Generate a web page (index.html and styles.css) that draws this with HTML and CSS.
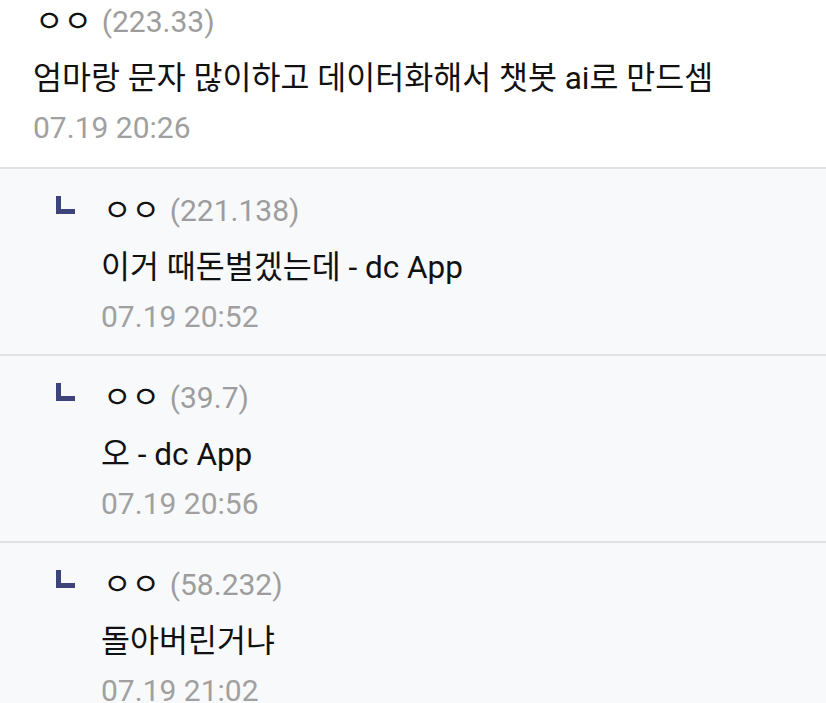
FILE: index.html
```html
<!DOCTYPE html>
<html lang="ko">

<head>
    <meta charset="UTF-8">
    <meta name="viewport" content="width=device-width, initial-scale=1.0">
    <title>댓글</title>
    <link rel="stylesheet" href="styles.css">
</head>

<body>
    <ul class="comments">
        <li class="comment first">
            <div class="writer">ㅇㅇ <span class="ip">(223.33)</span></div>
            <p class="text">엄마랑 문자 많이하고 데이터화해서 챗봇 ai로 만드셈</p>
            <div class="date">07.19 20:26</div>
        </li>
        <li class="comment reply">
            <span class="mark"></span>
            <div class="writer">ㅇㅇ <span class="ip">(221.138)</span></div>
            <p class="text">이거 때돈벌겠는데 - dc App</p>
            <div class="date">07.19 20:52</div>
        </li>
        <li class="comment reply">
            <span class="mark"></span>
            <div class="writer">ㅇㅇ <span class="ip">(39.7)</span></div>
            <p class="text">오 - dc App</p>
            <div class="date">07.19 20:56</div>
        </li>
        <li class="comment reply">
            <span class="mark"></span>
            <div class="writer">ㅇㅇ <span class="ip">(58.232)</span></div>
            <p class="text">돌아버린거냐</p>
            <div class="date">07.19 21:02</div>
        </li>
    </ul>
</body>

</html>
```

FILE: styles.css
```css
body {
    margin: 0;
    background-color: #f8f9fb;
    font-family: Roboto, "Noto Sans CJK KR", sans-serif;
    color: #111;
    overflow: hidden;
}

.comments {
    list-style: none;
    margin: 0;
    padding: 0;
}

.comment {
    position: relative;
    padding: 20px 0 12px 101px;
    border-bottom: 2px solid #e1e2e6;
    background-color: #f8f9fb;
}

.comment.first {
    padding: 0 0 14px 33px;
    background-color: #fff;
}

.writer {
    font-size: 31px;
    line-height: 44px;
    height: 44px;
    padding-left: 2px;
}

.ip {
    font-size: 30px;
    color: #9d9d9d;
    margin-left: 2px;
}

.text {
    margin: 11px 0 0;
    font-size: 31.5px;
    line-height: 48px;
}

.date {
    font-size: 30px;
    line-height: 50px;
    color: #a0a0a0;
}

/* reply arrow */
.mark {
    position: absolute;
    left: 56px;
    top: 27px;
    width: 19px;
    height: 18px;
    border-left: 5px solid #3e4479;
    border-bottom: 5px solid #3e4479;
    box-sizing: border-box;
}
```
